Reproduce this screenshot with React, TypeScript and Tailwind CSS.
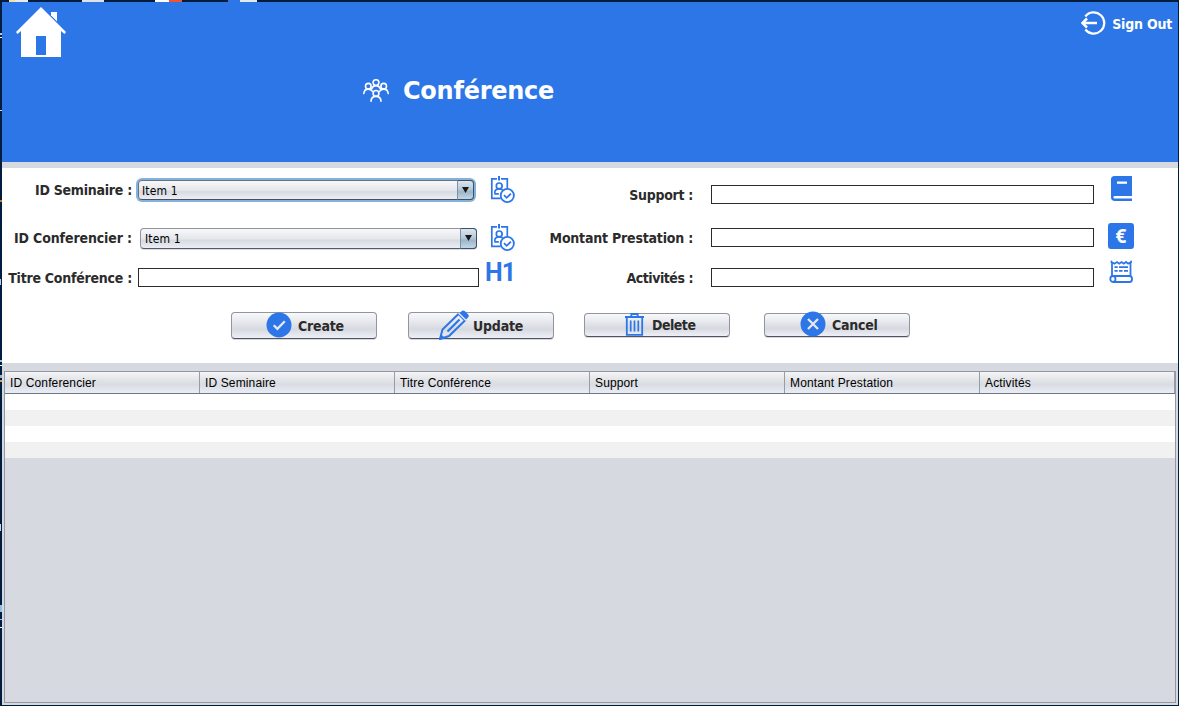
import type { ReactNode } from 'react';

const LABEL =
  "font-['DejaVu_Sans_Condensed','DejaVu_Sans',sans-serif] font-bold [font-stretch:condensed] text-[14px] leading-[20px] whitespace-nowrap";

function HouseIcon() {
  return (
    <svg width="50" height="50" viewBox="0 0 50 50" className="mt-[5px] ml-[14px] shrink-0">
      <path d="M25 0 50 25l-1.500 2L45 24v26H5V24l-3.500 3L0 25z" fill="#fff" />
      <path d="M35 5h6v9.500l-6-6z" fill="#fff" />
      <path d="M33.500 7.500 42 16" stroke="#2d76e8" strokeWidth=".9" />
      <path d="M20 29h10v19H20z" fill="#2d76e8" />
    </svg>
  );
}

function PeopleIcon() {
  return (
    <svg width="26" height="23" viewBox="0 0 26 23" fill="none" stroke="#fff" strokeWidth="1.600" strokeLinecap="round" className="mb-[2px]">
      <circle cx="13" cy="3.600" r="2.900" />
      <circle cx="5.300" cy="7.200" r="2.800" />
      <circle cx="20.700" cy="7.200" r="2.800" />
      <circle cx="13" cy="14.400" r="2.900" />
      <path d="M.8 14.500c.3-3 2-4.400 4.500-4.400 1.800 0 3.100.7 3.900 2.100M25.200 14.500c-.3-3-2-4.400-4.500-4.400-1.800 0-3.100.7-3.900 2.100M8.800 9.800c.5-2.100 1.900-3.200 4.200-3.200s3.700 1.100 4.200 3.200M8 22.200c.2-3.200 2-4.800 5-4.800s4.800 1.600 5 4.800" />
    </svg>
  );
}

function SignOutIcon() {
  return (
    <svg width="25" height="24" viewBox="0 0 25 24" fill="none" stroke="#fff">
      <path d="M4.300 5.500A10.600 10.600 0 1 1 4.300 18.500" strokeWidth="2.200" />
      <path d="M1.500 12h14.500" strokeWidth="2.500" />
      <path d="M6 7.500 1.500 12 6 16.500" strokeWidth="2.500" />
    </svg>
  );
}

function BadgeIcon() {
  return (
    <svg width="25" height="27" viewBox="0 0 25 27" fill="none" stroke="#2d76e8" strokeWidth="1.700" className="ml-auto mb-px">
      <path d="M7 2.800H1.800v19.500h9M11 2.800h6.300V13" />
      <path d="M9 0v4.500" strokeWidth="2" />
      <circle cx="9.200" cy="9.900" r="2.900" />
      <path d="M4.800 17.500v-1c0-2.500 1.800-3.700 4.400-3.700 1.500 0 2.700.4 3.500 1.200M4.300 17.800h4.500" />
      <circle cx="17.300" cy="19.500" r="6.600" fill="#fff" strokeWidth="1.800" />
      <path d="m14 19.200 2.600 2.600 4.300-4.200" strokeWidth="1.800" />
    </svg>
  );
}

function BookIcon() {
  return (
    <svg width="21" height="25" viewBox="0 0 21 25" className="mb-[13px] ml-[17px]">
      <path d="M3.500 0H21v20H4.200c-1.300 0-1.800.6-1.800 1.300s.6 1.300 1.800 1.300H21V25H4c-2.600 0-4-1.300-4-3.500v-18C0 1.200 1.200 0 3.500 0Z" fill="#2d76e8" />
      <path d="M6 5.500h10v2.300H6z" fill="#fff" />
    </svg>
  );
}

function ReceiptIcon() {
  return (
    <svg width="24" height="23" viewBox="0 0 24 23" className="mb-[13px] ml-[15px]" fill="none" stroke="#2d76e8" strokeWidth="1.800">
      <path d="M3 16V2l2.500 1.700L8 2l2.200 1.700L12.500 2l2.300 1.700L17 2l2.200 1.700L21.500 2v14M2.500 3V.8M22 3V.8" />
      <path d="M5.500 7.200h3.200M10 7.200h9M5.500 10.900h3.200M10 10.900h3.500M15 10.900h4" />
      <path d="M4 16h16.500c3.400 0 3.400 6 0 6H4c-3.600 0-3.600-6 0-6Zm0 0c3.300 0 3.300 6 0 6" />
    </svg>
  );
}

function CheckIcon() {
  return (
    <svg width="26" height="26" viewBox="0 0 26 26">
      <circle cx="13" cy="13" r="12.500" fill="#2d76e8" />
      <path d="m7.700 13.200 3.700 3.700 7.400-7.600" fill="none" stroke="#e4e8f0" strokeWidth="2.300" />
    </svg>
  );
}

function CrossIcon() {
  return (
    <svg width="26" height="26" viewBox="0 0 26 26">
      <circle cx="13" cy="13" r="12.500" fill="#2d76e8" />
      <path d="m8 8 10 10M18 8 8 18" fill="none" stroke="#e4e8f0" strokeWidth="2.300" />
    </svg>
  );
}

function PencilIcon() {
  return (
    <svg width="30" height="30" viewBox="0 0 30 30" fill="none" stroke="#2d76e8">
      <path d="M1 29 3.500 19.500 19.500 4 26 10.500 10 26Z" strokeWidth="2" />
      <path d="M0 30 1.800 24l4.200 4.100z" fill="#2d76e8" stroke="none" />
      <path d="M8.500 21.500 20.500 9.500" strokeWidth="2.200" />
      <path d="m20.500 3.300 2-2c1-1 2.500-1 3.500 0L29 4.200c1 1 1 2.400 0 3.400l-2 2z" fill="#2d76e8" stroke="none" />
      <path d="m19.500 3 7.500 7.500" stroke="#e4e8f0" strokeWidth="1.200" />
    </svg>
  );
}

function TrashIcon() {
  return (
    <svg width="19" height="23" viewBox="0 0 19 23" fill="none" stroke="#2d76e8" strokeWidth="1.800">
      <path d="M0 4h19M6.300 3.500V1h6.400v2.500M1.800 4v17.800h15.400V4" />
      <path d="M5.700 7.500v11M9.500 7.500v11M13.300 7.500v11" strokeWidth="1.700" />
    </svg>
  );
}

function Combo({ focused = false }: { focused?: boolean }) {
  return (
    <div
      className={
        focused
          ? 'ml-[6px] h-[20px] w-[336px] rounded-[4px] shadow-[0_0_0_2px_#83b3dc] border border-[#68727f] border-b-[#4b4f59] flex bg-[linear-gradient(#f8f8fa_0%,#e5e7eb_50%,#d7dae2_60%,#eceef4_100%)]'
          : 'ml-[8px] h-[21px] w-[337px] rounded-[4px] border border-[#92959f] border-b-[#555966] flex shadow-[0_1px_0_#d9dce3] bg-[linear-gradient(#f8f8fa_0%,#e5e7eb_50%,#d7dae2_60%,#eceef4_100%)]'
      }
    >
      <span
        className={`flex-1 font-['DejaVu_Sans_Condensed','DejaVu_Sans',sans-serif] [font-stretch:condensed] text-[12px] tracking-[0.15px] text-black ${
          focused ? 'pl-[3px] leading-[20px]' : 'pl-[4px] leading-[21px]'
        }`}
      >
        Item 1
      </span>
      <span className="w-[17px] -my-px -mr-px rounded-r-[4px] border border-[#3d5266] border-l-[#7c93a6] bg-[linear-gradient(#dce6ef_0%,#b7cad9_45%,#9eb6c8_60%,#c3d7e7_100%)] flex items-center justify-center">
        <svg width="7" height="6" viewBox="0 0 7 6"><path d="M0 0h7L3.500 6z" fill="#191919" /></svg>
      </span>
    </div>
  );
}

function TextInput({ className }: { className: string }) {
  return <input className={`mb-px h-[19px] shrink-0 border border-[#2b2b2b] bg-white ${className}`} />;
}

function Row({ label, labelClass, className = '', children }: { label: string; labelClass: string; className?: string; children: ReactNode }) {
  return (
    <div className={`flex items-center h-[28px] ${className}`}>
      <span className={`${LABEL} ${labelClass} shrink-0 text-right text-[#2b2b2b]`}>{label}</span>
      {children}
    </div>
  );
}

function Button({ label, className, children }: { label: string; className: string; children: ReactNode }) {
  return (
    <button
      className={`w-[146px] rounded-[4px] border border-[#92959f] border-b-[#505461] shadow-[0_1px_0_#d5d7dc] bg-[linear-gradient(#f8f9fb_0%,#e2e4e9_45%,#d6d9e0_65%,#eef0f6_100%)] flex items-center ${className}`}
    >
      <span className="mb-[2px] shrink-0">{children}</span>
      <span className={`${LABEL} text-[#2b2b2b]`}>{label}</span>
    </button>
  );
}

const COLUMNS = ['ID Conferencier', 'ID Seminaire', 'Titre Conférence', 'Support', 'Montant Prestation', 'Activités'];

export default function App() {
  return (
    <div className="relative h-[706px] w-[1179px] overflow-hidden bg-[#001d40] pt-[2px] pl-[2px] pr-px pb-[1px]">
      <div className="absolute left-0 top-0 flex h-[2px] w-full">
        <i className="ml-[9px] w-[6px] bg-[#f4e3a0]" />
        <i className="w-[13px] bg-[#e8ebee]" />
        <i className="ml-[54px] w-[22px] bg-[#dfe3e8]" />
        <i className="ml-[51px] w-[14px] bg-white" />
        <i className="w-[13px] bg-[#ee5430]" />
        <i className="ml-[46px] w-[12px] bg-[#2d76e8]" />
        <i className="w-[17px] bg-[#e1eaf0]" />
      </div>
      <div className="absolute left-0 top-0 flex h-full w-[2px] flex-col">
        <i className="mt-[33px] h-[2px] bg-[#a9c8e6]" />
        <i className="mt-[2px] h-px bg-white" />
        <i className="mt-[72px] h-px bg-[#c9d8e6]" />
        <i className="mt-[89px] h-[2px] bg-[#c9782a]" />
        <i className="mt-[77px] h-[6px] w-px bg-[#bcd0e2]" />
        <i className="mt-[75px] h-[2px] bg-[#8fbde0]" />
        <i className="mt-[3px] h-px bg-white" />
        <i className="mt-[9px] h-[3px] bg-[#9bb6d0]" />
        <i className="mt-[2px] h-[2px] bg-[#d59a58]" />
        <i className="mt-[142px] h-[7px] w-px bg-[#c9d8e6]" />
        <i className="mt-[74px] h-[7px] bg-[#8dbfe8]" />
        <i className="mt-[7px] h-px bg-[#9dcbee]" />
        <i className="mt-[7px] h-px bg-white" />
      </div>

      <div className="flex h-[703px] w-[1176px] flex-col bg-[#d6d9e0]">
        <header className="flex h-[160px] items-start bg-[#2d76e8]">
          <HouseIcon />
          <div className="ml-[297px] mt-[74px] flex h-[30px] items-center">
            <PeopleIcon />
            <h1 className="ml-[14px] font-['DejaVu_Sans',sans-serif] text-[24px] font-bold leading-[30px] tracking-[-0.25px] text-white">Conférence</h1>
          </div>
          <div className="ml-auto mr-[6px] mt-[9px] flex h-[24px] items-center">
            <SignOutIcon />
            <span className={`${LABEL} ml-[6px] mt-px text-white tracking-[-0.2px]`}>Sign Out</span>
          </div>
        </header>

        <section className="mt-[6px] h-[195px] bg-white">
          <div className="flex h-[144px]">
            <div className="w-[513px] pt-[8px]">
              <Row label="ID Seminaire :" labelClass="w-[130px] tracking-[-0.25px]">
                <Combo focused />
                <BadgeIcon />
              </Row>
              <Row label="ID Conferencier :" labelClass="w-[130px] tracking-[-0.12px]" className="mt-[20px]">
                <Combo />
                <BadgeIcon />
              </Row>
              <Row label="Titre Conférence :" labelClass="w-[130px] tracking-[-0.24px]" className="mt-[12px]">
                <TextInput className="ml-[6px] w-[341px]" />
                <span className="mb-[10px] ml-[6px] shrink-0 font-[Roboto,sans-serif] text-[25px] font-bold leading-[20px] tracking-[-0.8px] text-[#2d76e8]">H1</span>
              </Row>
            </div>
            <div className="w-[663px] pt-[13px]">
              <Row label="Support :" labelClass="w-[178px] tracking-[-0.3px]">
                <TextInput className="ml-[18px] w-[383px]" />
                <BookIcon />
              </Row>
              <Row label="Montant Prestation :" labelClass="w-[178px] tracking-[-0.2px]" className="mt-[15px]">
                <TextInput className="ml-[18px] w-[383px]" />
                <span className="mb-[4px] ml-[14px] flex h-[26px] w-[26px] items-center justify-center rounded-[3px] bg-[#2d76e8] font-['Noto_Sans',sans-serif] text-[19px] font-bold leading-[26px] text-white">€</span>
              </Row>
              <Row label="Activités :" labelClass="w-[178px] tracking-[-0.45px]" className="mt-[12px]">
                <TextInput className="ml-[18px] w-[383px]" />
                <ReceiptIcon />
              </Row>
            </div>
          </div>
          <div className="flex h-[27px] items-center pl-[229px]">
            <Button label="Create" className="h-[27px] pl-[34px] gap-[6px] tracking-[-0.2px]"><CheckIcon /></Button>
            <Button label="Update" className="ml-[31px] h-[27px] pl-[30px] gap-[4px] tracking-[-0.2px]"><PencilIcon /></Button>
            <Button label="Delete" className="mb-px ml-[30px] h-[24px] pl-[40px] gap-[8px] tracking-[-0.5px]"><TrashIcon /></Button>
            <Button label="Cancel" className="mb-px ml-[34px] h-[24px] pl-[35px] gap-[6px] tracking-[-0.25px]"><CrossIcon /></Button>
          </div>
        </section>

        <section className="ml-[2px] mt-[8px] h-[332px] w-[1172px] border border-[#9297a1]">
          <div className="flex h-[22px] border-b border-[#6f7480] bg-[linear-gradient(#f5f5f7_0%,#dfe1e5_45%,#d9dce2_60%,#e9edf6_100%)]">
            {COLUMNS.map((name) => (
              <div key={name} className="w-[195px] border-r border-[#989ca6] pl-[5px] font-['Liberation_Sans',sans-serif] text-[12px] leading-[22px] tracking-[0.13px] text-black">
                {name}
              </div>
            ))}
          </div>
          <div className="h-[16px] bg-white" />
          <div className="h-[16px] bg-[#f1f1f1]" />
          <div className="h-[16px] bg-white" />
          <div className="h-[16px] bg-[#f1f1f1]" />
        </section>
      </div>
    </div>
  );
}
